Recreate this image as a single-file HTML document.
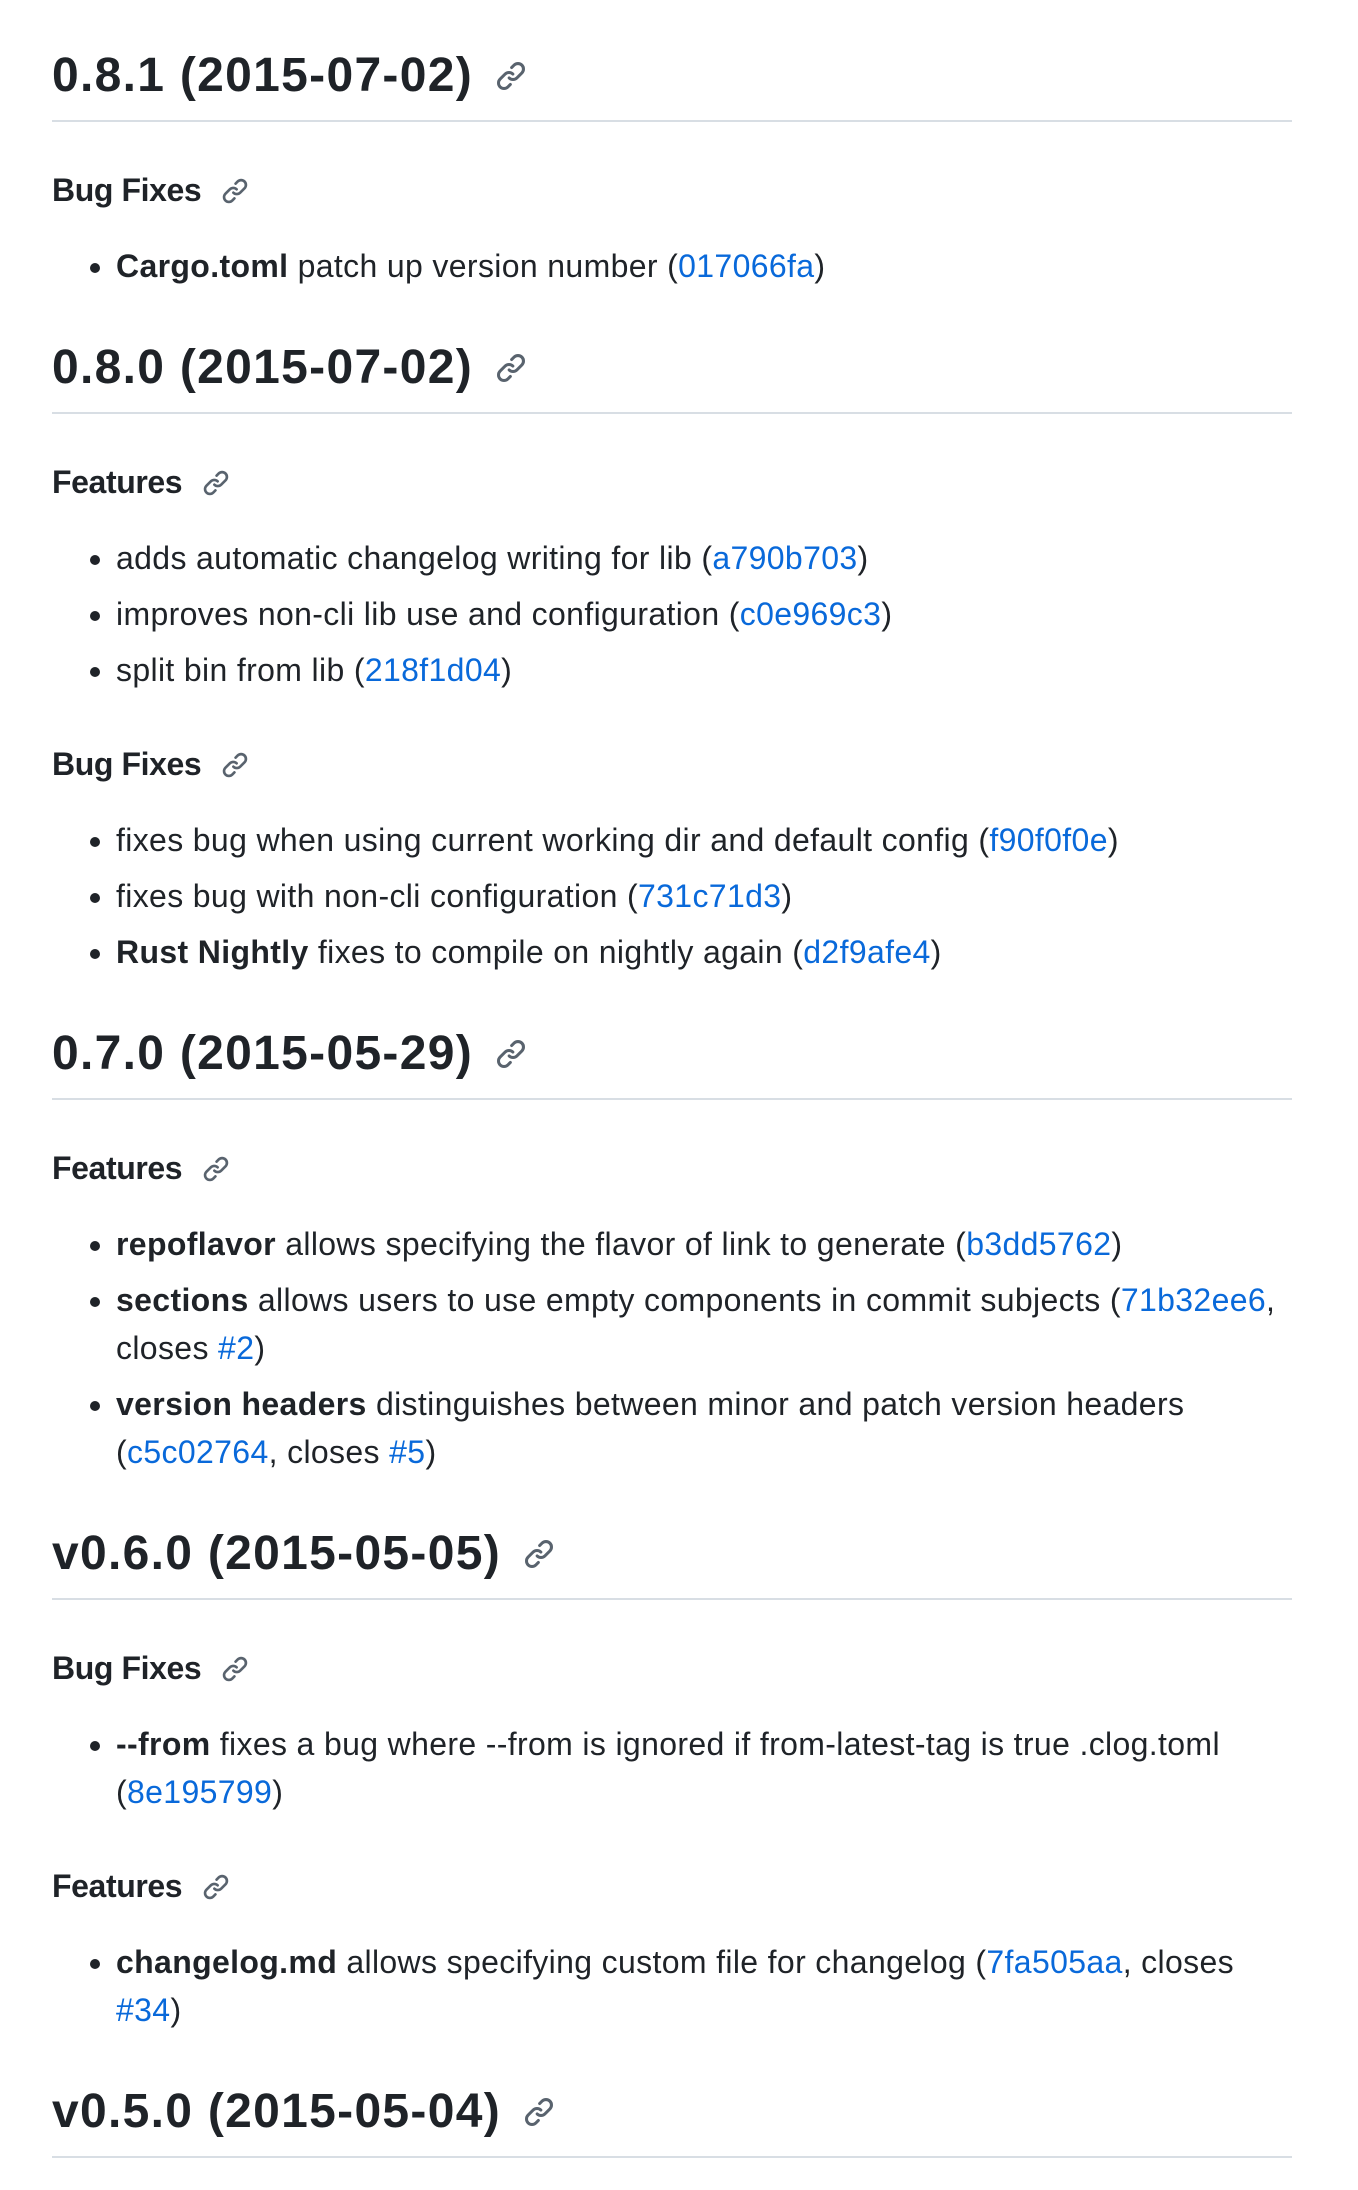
<!DOCTYPE html>
<html><head><meta charset="utf-8">
<style>
html,body{margin:0;padding:0;background:#fff;}
body{width:1358px;height:2152px;overflow:hidden;font-family:"Liberation Sans",Arial,sans-serif;color:#1f2328;font-size:32px;line-height:1.5;}
.md{position:absolute;left:52px;top:0;width:1240px;}
h2{font-size:48px;font-weight:600;line-height:1.25;margin:48px 0 32px;padding-bottom:14px;border-bottom:2px solid #d8dee4;white-space:nowrap;letter-spacing:1.3px;}
h2:first-child{margin-top:46px;}
h4{font-size:32px;font-weight:600;line-height:1.25;margin:50px 0 32px;white-space:nowrap;letter-spacing:-0.4px;}
h2+h4{margin-top:48px;}
ul{margin:0 0 32px;padding-left:64px;letter-spacing:0.35px;}
li{white-space:nowrap;}
li+li{margin-top:8px;}
a{color:#0969da;text-decoration:none;}
b{font-weight:700;}
svg.l{width:32px;height:32px;fill:#59636e;vertical-align:middle;margin-left:22px;position:relative;top:-2px;}
h4 svg.l{width:28px;height:28px;margin-left:20px;}
</style></head><body>
<svg width="0" height="0" style="position:absolute"><defs><symbol id="k" viewBox="0 0 16 16"><path d="m7.775 3.275 1.25-1.25a3.5 3.5 0 1 1 4.950 4.95l-2.5 2.5a3.5 3.5 0 0 1-4.95 0 .751.751 0 0 1 .018-1.042.751.751 0 0 1 1.042-.018 1.998 1.998 0 0 0 2.83 0l2.5-2.5a2.002 2.002 0 0 0-2.83-2.830l-1.25 1.25a.751.751 0 0 1-1.042-.018.751.751 0 0 1-.018-1.042Zm-4.69 9.64a1.998 1.998 0 0 0 2.83 0l1.25-1.25a.751.751 0 0 1 1.042.018.751.751 0 0 1 .018 1.042l-1.25 1.25a3.5 3.5 0 1 1-4.95-4.95l2.5-2.5a3.5 3.5 0 0 1 4.95 0 .751.751 0 0 1-.018 1.042.751.751 0 0 1-1.042.018 1.998 1.998 0 0 0-2.83 0l-2.5 2.5a1.998 1.998 0 0 0 0 2.83Z"/></symbol></defs></svg>
<div class="md">
<h2>0.8.1 (2015-07-02)<svg class="l"><use href="#k"/></svg></h2>
<h4>Bug Fixes<svg class="l"><use href="#k"/></svg></h4>
<ul><li><b>Cargo.toml</b> patch up version number (<a>017066fa</a>)</li></ul>

<h2>0.8.0 (2015-07-02)<svg class="l"><use href="#k"/></svg></h2>
<h4>Features<svg class="l"><use href="#k"/></svg></h4>
<ul>
<li>adds automatic changelog writing for lib (<a>a790b703</a>)</li>
<li>improves non-cli lib use and configuration (<a>c0e969c3</a>)</li>
<li>split bin from lib (<a>218f1d04</a>)</li>
</ul>
<h4>Bug Fixes<svg class="l"><use href="#k"/></svg></h4>
<ul>
<li>fixes bug when using current working dir and default config (<a>f90f0f0e</a>)</li>
<li>fixes bug with non-cli configuration (<a>731c71d3</a>)</li>
<li><b>Rust Nightly</b> fixes to compile on nightly again (<a>d2f9afe4</a>)</li>
</ul>

<h2>0.7.0 (2015-05-29)<svg class="l"><use href="#k"/></svg></h2>
<h4>Features<svg class="l"><use href="#k"/></svg></h4>
<ul>
<li><b>repoflavor</b> allows specifying the flavor of link to generate (<a>b3dd5762</a>)</li>
<li><b>sections</b> allows users to use empty components in commit subjects (<a>71b32ee6</a>,<br>closes <a>#2</a>)</li>
<li><b>version headers</b> distinguishes between minor and patch version headers<br>(<a>c5c02764</a>, closes <a>#5</a>)</li>
</ul>

<h2>v0.6.0 (2015-05-05)<svg class="l"><use href="#k"/></svg></h2>
<h4>Bug Fixes<svg class="l"><use href="#k"/></svg></h4>
<ul>
<li><b>--from</b> fixes a bug where --from is ignored if from-latest-tag is true .clog.toml<br>(<a>8e195799</a>)</li>
</ul>
<h4>Features<svg class="l"><use href="#k"/></svg></h4>
<ul>
<li><b>changelog.md</b> allows specifying custom file for changelog (<a>7fa505aa</a>, closes<br><a>#34</a>)</li>
</ul>

<h2>v0.5.0 (2015-05-04)<svg class="l"><use href="#k"/></svg></h2>
</div>
</body></html>
